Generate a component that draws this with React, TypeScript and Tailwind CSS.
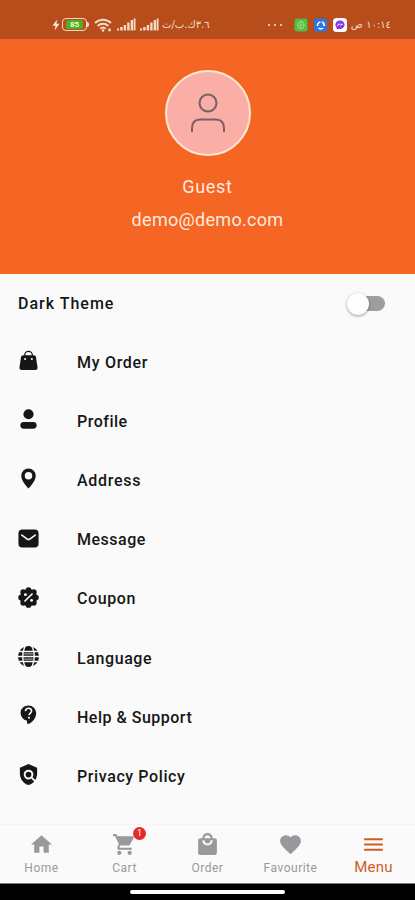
import { useState } from 'react'
import type { ReactNode } from 'react'
import { MdFavorite, MdHome, MdLocalMall, MdMenu, MdPolicy, MdShoppingCart } from 'react-icons/md'

interface MenuItem {
  label: string
  icon: ReactNode
  tracking: string
}

const menuItems: MenuItem[] = [
  {
    label: 'My Order',
    tracking: 'tracking-[0.7px]',
    icon: (
      <svg viewBox="0 0 24 24" className="w-6 h-6">
        <path d="M8 8V6.5a4 4 0 0 1 8 0V8" fill="none" stroke="currentColor" strokeWidth="1.3" />
        <path d="M6.5 6.5h11c1.4 0 2 .8 2.3 2l1.6 10.3c.3 2-.6 3.2-2.4 3.2H5c-1.800 0-2.700-1.200-2.400-3.200L4.200 8.500c.3-1.200.9-2 2.300-2z" />
        <circle cx="8.500" cy="10.500" r="1.100" fill="#fafafa" />
        <circle cx="15.500" cy="10.500" r="1.100" fill="#fafafa" />
      </svg>
    ),
  },
  {
    label: 'Profile',
    tracking: 'tracking-[0.5px]',
    icon: (
      <svg viewBox="0 0 24 24" className="w-6 h-6">
        <circle cx="12" cy="6.500" r="5.300" />
        <rect x="3.500" y="14.500" width="17" height="7.200" rx="3.600" />
      </svg>
    ),
  },
  {
    label: 'Address',
    tracking: 'tracking-[0.7px]',
    icon: (
      <svg viewBox="0 0 24 24" className="w-6 h-6">
        <path
          fillRule="evenodd"
          d="M12 1.500a7.500 7.500 0 0 0-7.500 7.500c0 5 4.300 9.500 7.500 13.500 3.200-4 7.500-8.500 7.500-13.500A7.500 7.500 0 0 0 12 1.500zm0 3.800a3.900 3.900 0 1 1 0 7.800 3.900 3.900 0 0 1 0-7.800z"
        />
      </svg>
    ),
  },
  {
    label: 'Message',
    tracking: 'tracking-[0.5px]',
    icon: (
      <svg viewBox="0 0 24 24" className="w-6 h-6">
        <rect x="1.500" y="2.500" width="21" height="19" rx="4" />
        <path
          d="M5 8.500l5.300 3.900c1 .8 2.400.8 3.400 0L19 8.500"
          fill="none"
          stroke="#fafafa"
          strokeWidth="1.700"
          strokeLinecap="round"
        />
      </svg>
    ),
  },
  {
    label: 'Coupon',
    tracking: 'tracking-[0.6px]',
    icon: (
      <svg viewBox="0 0 24 24" className="w-6 h-6">
        <circle cx="12" cy="12" r="9" />
        <circle cx="12" cy="4.300" r="3" />
        <circle cx="17.500" cy="6.500" r="3" />
        <circle cx="19.700" cy="12" r="3" />
        <circle cx="17.500" cy="17.500" r="3" />
        <circle cx="12" cy="19.700" r="3" />
        <circle cx="6.500" cy="17.500" r="3" />
        <circle cx="4.300" cy="12" r="3" />
        <circle cx="6.500" cy="6.500" r="3" />
        <path d="M8.300 15.700l7.400-7.400" stroke="#fafafa" strokeWidth="1.700" strokeLinecap="round" />
        <circle cx="8.800" cy="9" r="1.500" fill="#fafafa" />
        <circle cx="15.200" cy="15" r="1.500" fill="#fafafa" />
      </svg>
    ),
  },
  {
    label: 'Language',
    tracking: 'tracking-[0.6px]',
    icon: (
      <svg viewBox="0 0 24 24" className="w-6 h-6">
        <circle cx="12" cy="12" r="11" />
        <g fill="none" stroke="#fafafa" strokeWidth="1.500">
          <ellipse cx="12" cy="12" rx="6" ry="13" />
          <path d="M0 6.700h24M0 12h24M0 17.300h24" />
          <path d="M7.500 9.300h9M7.500 14.700h9" strokeWidth="0.800" />
        </g>
      </svg>
    ),
  },
  {
    label: 'Help & Support',
    tracking: 'tracking-[0.5px]',
    icon: (
      <svg viewBox="0 0 24 24" className="w-6 h-6">
        <path d="M12 1.500a8 8 0 0 0-1.500 15.900V20.500h2.300c3.700-1.700 7.200-5.800 7.200-11A8 8 0 0 0 12 1.500z" />
        <path
          d="M8.800 7.400c.2-1.900 1.500-3 3.200-3s3.200 1.100 3.200 2.900c0 2.100-2.600 2.300-2.600 4.500"
          fill="none"
          stroke="#fafafa"
          strokeWidth="1.700"
        />
        <circle cx="12.500" cy="14.400" r="1.100" fill="#fafafa" />
      </svg>
    ),
  },
  {
    label: 'Privacy Policy',
    tracking: 'tracking-[0.6px]',
    icon: <MdPolicy className="w-6 h-6" />,
  },
]

const tabs = [
  { label: 'Home', Icon: MdHome, badge: 0 },
  { label: 'Cart', Icon: MdShoppingCart, badge: 1 },
  { label: 'Order', Icon: MdLocalMall, badge: 0 },
  { label: 'Favourite', Icon: MdFavorite, badge: 0 },
  { label: 'Menu', Icon: MdMenu, badge: 0 },
]

function SignalBars() {
  return (
    <svg viewBox="0 0 19 13" className="w-[19px] h-[13px] fill-[#f7d9c8]">
      <rect x="0" y="10.500" width="2" height="2" />
      <rect x="3.200" y="9" width="2.400" height="3.500" />
      <rect x="6.700" y="7" width="2.400" height="5.500" />
      <rect x="10.200" y="4.500" width="2.400" height="8" />
      <rect x="13.700" y="2" width="2.400" height="10.500" />
      <rect x="16.700" y="0.500" width="1.800" height="12" />
    </svg>
  )
}

function StatusBar() {
  return (
    <div className="flex items-center justify-between h-[39px] pl-[52px] pr-[24px] pt-[10px] bg-[#b64d1a] text-[#f7d9c8]">
      <div className="flex items-center">
        <svg viewBox="0 0 8 12" className="w-2 h-3 fill-[#fbe6da]">
          <path d="M5 0.500L0.500 6.800h3L2.500 11.500 7.500 4.800h-3z" />
        </svg>
        <div className="flex items-center justify-center ml-[2px] w-[25px] h-[13px] p-px rounded-[4px] border-[1.500px] border-[#f7d9c8]">
          <div className="flex items-center justify-center w-[17px] h-[9px] bg-[#53ae20] rounded-[2px] text-[8px] leading-none font-bold text-[#e9ffd8]">
            85
          </div>
        </div>
        <div className="w-[2px] h-[5px] bg-[#f7d9c8] rounded-r-sm" />
        <svg viewBox="0 0 18 14" className="ml-[5px] w-[18px] h-[14px]">
          <g fill="none" stroke="#f7d9c8" strokeWidth="2">
            <path d="M1 5a11.500 11.500 0 0 1 16 0" />
            <path d="M3.700 8a7.500 7.500 0 0 1 10.600 0" />
            <path d="M6.300 10.700a4 4 0 0 1 5.400 0" />
          </g>
          <circle cx="9" cy="12.500" r="1.300" fill="#f7d9c8" />
          <circle cx="15.500" cy="12" r="1.400" fill="#f7d9c8" />
        </svg>
        <div className="flex ml-[5px] gap-1">
          <SignalBars />
          <SignalBars />
        </div>
        <span dir="rtl" className="ml-[3px] font-['DejaVu_Sans',sans-serif] text-[10px] leading-3 tracking-tight">
          ٣.٦ك.ب/ث
        </span>
      </div>
      <div className="flex items-center">
        <div className="flex gap-[4px] mr-[12px]">
          <i className="w-[2px] h-[2px] rounded-full bg-[#fbe6da]" />
          <i className="w-[2px] h-[2px] rounded-full bg-[#fbe6da]" />
          <i className="w-[2px] h-[2px] rounded-full bg-[#fbe6da]" />
        </div>
        <svg viewBox="0 0 53 14" className="w-[53px] h-[14px]">
          <rect x="0.500" y="0.500" width="13" height="13" rx="3" fill="#55bd42" />
          <path d="M7 3.500c2 0 3 1.500 3 3.500s-1 3.500-3 3.500-3-1.500-3-3.500 1-3.500 3-3.500zM7 5v4" fill="none" stroke="#b4e6a2" />
          <rect x="20" y="0.500" width="13" height="13" rx="3" fill="#2878e8" />
          <path
            d="M23.500 8a3.500 3.500 0 0 1 3-4M28 3.900A3.500 3.500 0 0 1 30 8M24.500 10a3.500 3.500 0 0 0 4.500 0"
            fill="none"
            stroke="#fff"
            strokeWidth="1.600"
          />
          <rect x="39" y="0" width="14" height="14" rx="3.500" fill="#fff" />
          <path d="M46 2.500c-2.700 0-4.600 1.900-4.600 4.300 0 1.300.5 2.300 1.400 3.100v1.700l1.500-.7c3.300.8 6.300-1 6.300-4.100 0-2.400-1.900-4.300-4.600-4.300z" fill="#8a37ea" />
          <path d="M43.200 8l2-2.200 1.500 1.300L48.800 6" fill="none" stroke="#fff" />
        </svg>
        <span dir="rtl" className="ml-1 font-['DejaVu_Sans',sans-serif] text-[10px] leading-3 tracking-tight">
          ١٠:١٤ ص
        </span>
      </div>
    </div>
  )
}

export default function App() {
  const [darkTheme, setDarkTheme] = useState(false)
  const [activeTab, setActiveTab] = useState('Menu')

  return (
    <div className="flex flex-col w-full h-[900px] overflow-hidden bg-[#fafafa] font-[Roboto,sans-serif] text-[#161616]">
      <StatusBar />

      {/* Profile header */}
      <div className="flex flex-col items-center h-[235px] pt-[31px] bg-[#f56624] text-[#ffeadd]">
        <div className="flex items-center justify-center w-[86px] h-[86px] rounded-full border-2 border-[#ffe5d3] bg-[#faaea6]">
          <svg viewBox="0 0 36 40" className="w-9 h-10" fill="none" stroke="#756064" strokeWidth="2">
            <circle cx="18" cy="10" r="8.500" />
            <path d="M2 39v-3.500c0-5.500 2.500-9 8-9h16c5.500 0 8 3.500 8 9V39" />
          </svg>
        </div>
        <p className="mt-[17px] text-[18px] leading-[28px] tracking-[0.7px]">Guest</p>
        <p className="mt-[5px] text-[18px] leading-[28px] tracking-[0.3px]">demo@demo.com</p>
      </div>

      {/* Theme toggle */}
      <div className="flex items-center justify-between h-[59px] pl-[18px] pr-[30px]">
        <span className="text-[16px] font-medium tracking-[1px]">Dark Theme</span>
        <button
          role="switch"
          aria-checked={darkTheme}
          aria-label="Dark Theme"
          onClick={() => setDarkTheme(!darkTheme)}
          className="flex items-center justify-end w-[38px] h-[22px]"
        >
          <span className="flex items-center w-[34px] h-[15px] rounded-full bg-[#9e9e9e]">
            <span className="shrink-0 -ml-[4px] w-[22px] h-[22px] rounded-full bg-[#fdfdfd] shadow-[0_1px_3px_rgba(0,0,0,0.4)]" />
          </span>
        </button>
      </div>

      {/* Menu */}
      <ul className="flex-1 min-h-0">
        {menuItems.map((item) => (
          <li key={item.label} className="flex items-center h-[59.200px] pl-4">
            <span className="flex justify-center w-6 mb-1 fill-current [&>svg]:w-[23px] [&>svg]:h-[23px]">{item.icon}</span>
            <span className={`ml-[37px] text-[16px] font-medium ${item.tracking}`}>{item.label}</span>
          </li>
        ))}
      </ul>

      {/* Bottom navigation */}
      <nav className="grid grid-cols-5 h-[59px] border-t border-[#f2f2f2] bg-[#fafafa]">
        {tabs.map(({ label, Icon, badge }) => {
          const active = label === activeTab
          return (
            <button
              key={label}
              onClick={() => setActiveTab(label)}
              className={`flex flex-col items-center pt-[7px] ${active ? 'text-[#cf5c24]' : 'text-[#97999c]'}`}
            >
              <span className="relative">
                <Icon className="w-[25px] h-[25px]" />
                {badge > 0 && (
                  <span className="absolute -top-[5px] -right-[9px] flex items-center justify-center w-[13px] h-[13px] rounded-full bg-[#e42a27] text-[9px] leading-none text-white">
                    {badge}
                  </span>
                )}
              </span>
              <span className={active ? 'text-[15px] leading-5 tracking-[0.2px]' : 'mt-px text-[12px] leading-5 tracking-[0.5px]'}>
                {label}
              </span>
            </button>
          )
        })}
      </nav>

      <div className="flex justify-center items-center h-[17px] border-t border-[#777] bg-black">
        <div className="w-[155px] h-[4px] rounded-full bg-white" />
      </div>
    </div>
  )
}
